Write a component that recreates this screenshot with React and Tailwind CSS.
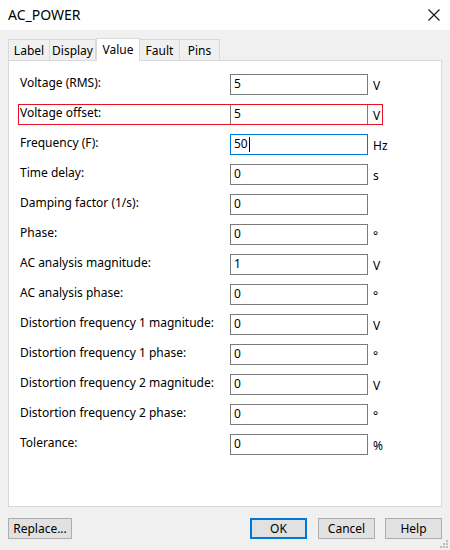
const rows = [
    { label: 'Voltage (RMS):', value: '5', unit: 'V' },
    { label: 'Voltage offset:', value: '5', unit: 'V', marked: true },
    { label: 'Frequency (F):', value: '50', unit: 'Hz', focused: true },
    { label: 'Time delay:', value: '0', unit: 's' },
    { label: 'Damping factor (1/s):', value: '0', unit: '' },
    { label: 'Phase:', value: '0', unit: '°' },
    { label: 'AC analysis magnitude:', value: '1', unit: 'V' },
    { label: 'AC analysis phase:', value: '0', unit: '°' },
    { label: 'Distortion frequency 1 magnitude:', value: '0', unit: 'V' },
    { label: 'Distortion frequency 1 phase:', value: '0', unit: '°' },
    { label: 'Distortion frequency 2 magnitude:', value: '0', unit: 'V' },
    { label: 'Distortion frequency 2 phase:', value: '0', unit: '°' },
    { label: 'Tolerance:', value: '0', unit: '%' },
];

const tabs = [
    { name: 'Label', w: 'w-[42px]' },
    { name: 'Display', w: 'w-[46px]' },
    { name: 'Value', w: 'w-[44px]', active: true },
    { name: 'Fault', w: 'w-[40px]' },
    { name: 'Pins', w: 'w-[40px]' },
];

const App = () => {
    return (
        <div
            className="w-[450px] h-[550px] bg-[#f0f0f0] flex flex-col relative overflow-hidden text-[12px] text-black"
            style={{ fontFamily: '"Segoe UI", "Noto Sans", "Liberation Sans", sans-serif' }}
        >
            {/* Title bar */}
            <div className="h-[30px] bg-white flex items-center justify-between pl-[8px] pr-[10px] shrink-0">
                <span className="text-[14px] leading-none">AC_POWER</span>
                <svg width="12" height="12" viewBox="0 0 12 12" className="mr-[0px]">
                    <path d="M0.5 0.5 L11.5 11.5 M11.5 0.5 L0.5 11.5" stroke="#111" strokeWidth="1.1" />
                </svg>
            </div>

            {/* Tabs */}
            <div className="px-[8px] pt-[8px] flex items-end h-[30px] shrink-0 relative z-10">
                {tabs.map((t) => (
                    <div
                        key={t.name}
                        className={
                            t.active
                                ? `${t.w} h-[23px] -mb-[1px] bg-white border border-[#d9d9d9] border-b-0 flex items-start justify-center pt-[2px]`
                                : `${t.w} h-[21px] bg-[#f0f0f0] border border-[#d9d9d9] border-l-0 first:border-l border-b-0 flex items-center justify-center pt-[1px]`
                        }
                    >
                        {t.name}
                    </div>
                ))}
            </div>

            {/* Panel */}
            <div className="mx-[8px] h-[447px] bg-white border border-[#d9d9d9] pt-[13px] pl-[11px] shrink-0">
                <div className="flex flex-col gap-[9px]">
                    {rows.map((r) => (
                        <div key={r.label} className="flex items-center h-[21px] relative">
                            <span className="w-[210px] -mt-[4px]">{r.label}</span>
                            <div
                                className={
                                    r.focused
                                        ? 'w-[138px] h-[21px] border border-[#0078d7] bg-white flex items-center pl-[3px]'
                                        : 'w-[138px] h-[21px] border border-[#7a7a7a] bg-white flex items-center pl-[3px]'
                                }
                            >
                                <span className="-mt-[2px]">{r.value}</span>
                                {r.focused && <span className="w-px h-[15px] bg-black ml-[1px]" />}
                            </div>
                            <span className="ml-[5px] pt-[2px]">{r.unit}</span>
                            {r.marked && (
                                <div className="absolute left-[-2px] top-0 w-[365px] h-[21px] border border-[#e81123] pointer-events-none" />
                            )}
                        </div>
                    ))}
                </div>
            </div>

            {/* Buttons */}
            <div className="flex items-center px-[8px] mt-[11px]">
                <button className="w-[64px] h-[21px] bg-[#e1e1e1] border border-[#adadad] flex items-center justify-center">
                    Replace...
                </button>
                <div className="flex-1" />
                <button className="w-[57px] h-[21px] bg-[#e1e1e1] border-2 border-[#0078d7] flex items-center justify-center">
                    OK
                </button>
                <button className="w-[57px] h-[21px] ml-[11px] bg-[#e1e1e1] border border-[#adadad] flex items-center justify-center">
                    Cancel
                </button>
                <button className="w-[57px] h-[21px] ml-[10px] bg-[#e1e1e1] border border-[#adadad] flex items-center justify-center">
                    Help
                </button>
            </div>

            {/* Resize grip */}
            <svg width="10" height="10" viewBox="0 0 10 10" className="absolute right-[1px] bottom-[1px]">
                <rect x="7" y="1" width="2" height="2" fill="#bcbcbc" />
                <rect x="4" y="4" width="2" height="2" fill="#bcbcbc" />
                <rect x="7" y="4" width="2" height="2" fill="#bcbcbc" />
                <rect x="1" y="7" width="2" height="2" fill="#bcbcbc" />
                <rect x="4" y="7" width="2" height="2" fill="#bcbcbc" />
                <rect x="7" y="7" width="2" height="2" fill="#bcbcbc" />
            </svg>
        </div>
    );
};

export default App;
